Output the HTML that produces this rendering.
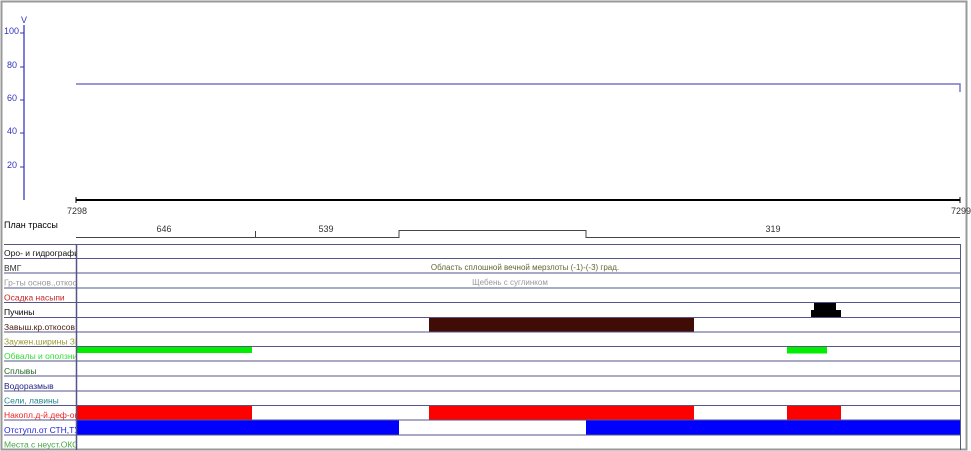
<!DOCTYPE html>
<html><head><meta charset="utf-8"><style>
html,body{margin:0;padding:0;background:#fff;width:971px;height:451px;overflow:hidden}
svg{display:block}
text{font-family:"Liberation Sans",Arial,sans-serif;font-size:9px}
.lb text{font-size:8.5px}
</style></head><body>
<svg width="971" height="451" viewBox="0 0 971 451" xmlns="http://www.w3.org/2000/svg">
<defs><clipPath id="lc"><rect x="0" y="240" width="76" height="211"/></clipPath></defs>
<rect x="1.5" y="1.5" width="965" height="448" fill="none" stroke="#999" stroke-width="2"/>
<line x1="24" y1="25" x2="24" y2="200" stroke="#5555cc" stroke-width="1.5"/>
<text x="24" y="23" text-anchor="middle" fill="#3333bb">V</text>
<g stroke="#3333bb" stroke-width="1">
<line x1="20" y1="33" x2="24" y2="33"/><line x1="20" y1="67" x2="24" y2="67"/><line x1="20" y1="100" x2="24" y2="100"/><line x1="20" y1="133" x2="24" y2="133"/><line x1="20" y1="167" x2="24" y2="167"/>
</g>
<g fill="#3333bb" text-anchor="end">
<text x="19" y="34">100</text><text x="17" y="68">80</text><text x="17" y="101">60</text><text x="17" y="134">40</text><text x="17" y="168">20</text>
</g>
<polyline points="76,84 960,84 960,92" fill="none" stroke="#7777cc" stroke-width="1.5"/>
<line x1="76" y1="200" x2="960" y2="200" stroke="#000" stroke-width="2"/>
<line x1="76" y1="197" x2="76" y2="203" stroke="#000"/>
<line x1="960" y1="197" x2="960" y2="203" stroke="#000"/>
<text x="77" y="214" text-anchor="middle" fill="#333">7298</text>
<text x="961" y="214" text-anchor="middle" fill="#333">7299</text>
<text x="4" y="228" fill="#000">План трассы</text>
<polyline points="76,237.5 399,237.5 399,230.5 586,230.5 586,237.5 960,237.5" fill="none" stroke="#444" stroke-width="1"/>
<line x1="255.5" y1="231" x2="255.5" y2="237" stroke="#444"/>
<text x="164" y="232" text-anchor="middle" fill="#333">646</text>
<text x="326" y="232" text-anchor="middle" fill="#333">539</text>
<text x="773" y="232" text-anchor="middle" fill="#333">319</text>
<rect x="76" y="405" width="176" height="15" fill="#ff0000"/>
<rect x="429" y="405" width="265" height="15" fill="#ff0000"/>
<rect x="787" y="405" width="54" height="15" fill="#ff0000"/>
<rect x="76" y="420" width="323" height="15" fill="#0000ff"/>
<rect x="586" y="420" width="375" height="15" fill="#0000ff"/>
<rect x="429" y="317" width="265" height="15" fill="#3f0d06"/>
<rect x="76" y="347" width="176" height="6" fill="#00ee00"/>
<rect x="787" y="347" width="40" height="6.5" fill="#00ee00"/>
<rect x="814" y="302" width="22" height="8" fill="#000"/>
<rect x="811" y="310" width="30" height="7.5" fill="#000"/>
<g stroke="#555588" stroke-width="1">
<line x1="4" y1="244.5" x2="961" y2="244.5"/>
<line x1="4" y1="258.5" x2="961" y2="258.5"/>
<line x1="4" y1="273" x2="961" y2="273"/>
<line x1="4" y1="288" x2="961" y2="288"/>
<line x1="4" y1="302.5" x2="961" y2="302.5"/>
<line x1="4" y1="317.5" x2="961" y2="317.5"/>
<line x1="4" y1="332" x2="961" y2="332"/>
<line x1="4" y1="346.5" x2="961" y2="346.5"/>
<line x1="4" y1="361" x2="961" y2="361"/>
<line x1="4" y1="376" x2="961" y2="376"/>
<line x1="4" y1="391" x2="961" y2="391"/>
<line x1="4" y1="405.5" x2="961" y2="405.5"/>
<line x1="4" y1="420" x2="961" y2="420"/>
<line x1="4" y1="435" x2="961" y2="435"/>
<line x1="76.5" y1="244" x2="76.5" y2="450" stroke-width="1.5"/>
<line x1="960.5" y1="244" x2="960.5" y2="450"/>
</g>
<g class="lb" clip-path="url(#lc)">
<text x="4" y="256" fill="#111">Оро- и гидрография</text>
<text x="4" y="271" fill="#333">ВМГ</text>
<text x="4" y="285.5" fill="#999">Гр-ты основ.,откос</text>
<text x="4" y="300.5" fill="#cc2222">Осадка насыпи</text>
<text x="4" y="315" fill="#000">Пучины</text>
<text x="4" y="330" fill="#4a1a10">Завыш.кр.откосов</text>
<text x="4" y="344.5" fill="#999933">Заужен.ширины ЗП</text>
<text x="4" y="359" fill="#33dd33">Обвалы и оползни</text>
<text x="4" y="374" fill="#226622">Сплывы</text>
<text x="4" y="389" fill="#222288">Водоразмыв</text>
<text x="4" y="403.5" fill="#228888">Сели, лавины</text>
<text x="4" y="418" fill="#ee2222">Накопл.д-й.деф-ов.</text>
<text x="4" y="433" fill="#2222dd">Отступл.от СТН,ТУ</text>
<text x="4" y="447.5" fill="#44aa44">Места с неуст.ОКС</text>
</g>
<text x="525" y="270" text-anchor="middle" fill="#666633" style="font-size:8px">Область сплошной вечной мерзлоты (-1)-(-3) град.</text>
<text x="510" y="285" text-anchor="middle" fill="#999" style="font-size:8px">Щебень с суглинком</text>
</svg>
</body></html>
